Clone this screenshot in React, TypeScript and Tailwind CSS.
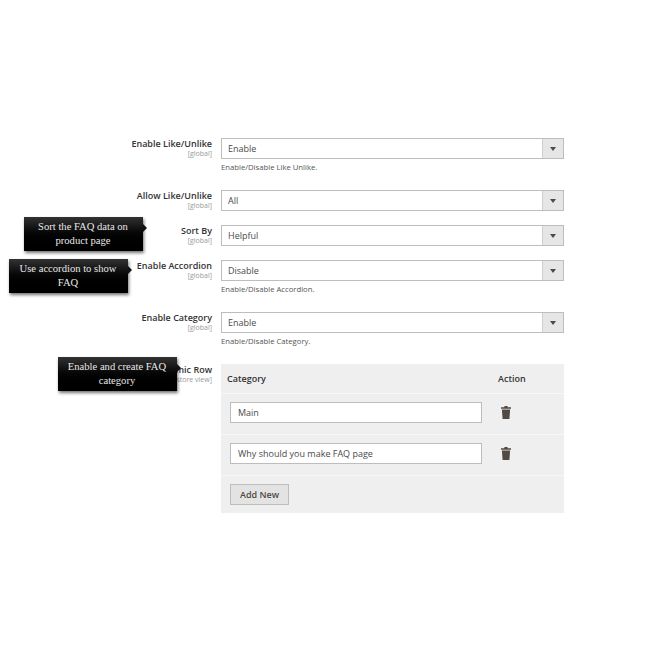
const Select = ({ value }: { value: string }) => (
  <div className="flex h-[21px] w-[343px] border border-[#bdbdbd] bg-white">
    <div className="flex flex-1 items-center pt-[1px] pl-[6px] text-[9px] text-[#4a4a4a]">{value}</div>
    <div className="flex w-[21px] items-center justify-center border-l border-[#cfcfcf] bg-[#e6e6e6]">
      <div className="h-0 w-0 border-x-[3px] border-t-[4px] border-x-transparent border-t-[#514943]" />
    </div>
  </div>
);

const Row = ({ label, scope, value, help, mb }: { label: string; scope: string; value: string; help?: string; mb: string }) => (
  <div className={`flex ${mb}`}>
    <div className="w-[212px] text-right">
      <div className="text-[9px] leading-[12px] font-semibold text-[#333]">{label}</div>
      <div className="text-[7px] leading-[8px] text-[#999]">{scope}</div>
    </div>
    <div className="ml-[9px]">
      <Select value={value} />
      {help && <div className="mt-[3px] text-[7.7px] leading-[11px] text-[#555]">{help}</div>}
    </div>
  </div>
);

const Tip = ({ className, lines }: { className: string; lines: string[] }) => (
  <div className={`absolute flex h-[34px] w-[119px] flex-col items-center justify-center bg-gradient-to-b from-[#333] via-[#050505] to-[#000] pr-[1px] pb-[1px] text-center font-['Liberation_Serif',serif] text-[10.6px] leading-[14px] text-[#e8e8e8] shadow-[1px_2px_3px_rgba(0,0,0,0.55)] ${className}`}>
    {lines.map((l) => (
      <div key={l}>{l}</div>
    ))}
    <div className="absolute top-[7px] left-full h-0 w-0 border-y-[4px] border-l-[4px] border-y-transparent border-l-[#111]" />
  </div>
);

const Trash = () => (
  <svg width="10" height="13" viewBox="0 0 10 13" className="fill-[#514943]">
    <path d="M3.6 0h2.8l.4 1.2H10v1.5H0V1.2h3.2zM.9 3.5h8.2L8.4 13H1.6z" />
  </svg>
);

const Item = ({ value }: { value: string }) => (
  <div className="flex h-[41px] items-start border-b border-[#f7f7f7] pt-[8px] pl-[9px]">
    <div className="flex h-[21px] w-[252px] items-center border border-[#bdbdbd] bg-white pl-[7px] text-[9px] text-[#4a4a4a]">{value}</div>
    <div className="mt-[4px] ml-[19px]"><Trash /></div>
  </div>
);

export default function App() {
  return (
    <div className="relative h-[670px] w-[670px] overflow-hidden bg-white pt-[138px] font-['Open_Sans',sans-serif]">
      <Row label="Enable Like/Unlike" scope="[global]" value="Enable" help="Enable/Disable Like Unlike." mb="mb-[17px]" />
      <Row label="Allow Like/Unlike" scope="[global]" value="All" mb="mb-[14px]" />
      <Row label="Sort By" scope="[global]" value="Helpful" mb="mb-[14px]" />
      <Row label="Enable Accordion" scope="[global]" value="Disable" help="Enable/Disable Accordion." mb="mb-[17px]" />
      <Row label="Enable Category" scope="[global]" value="Enable" help="Enable/Disable Category." mb="mb-[17px]" />
      <div className="flex">
        <div className="w-[212px] text-right">
          <div className="text-[9px] leading-[12px] font-semibold text-[#333]">Dynamic Row</div>
          <div className="text-[7px] leading-[8px] text-[#999]">[store view]</div>
        </div>
        <div className="ml-[9px] w-[343px] bg-[#efefef]">
          <div className="flex h-[30px] items-center border-b border-[#f7f7f7] pt-[1px] pl-[6px] text-[9px] font-semibold text-[#333]">
            <div className="w-[271px]">Category</div>
            <div>Action</div>
          </div>
          <Item value="Main" />
          <Item value="Why should you make FAQ page" />
          <div className="flex h-[37px] items-start pt-[8px] pl-[9px]">
            <div className="flex h-[21px] w-[59px] items-center justify-center border border-[#bdbdbd] bg-[#e3e3e3] text-[9px] font-semibold text-[#514943]">Add New</div>
          </div>
        </div>
      </div>
      <Tip className="top-[217px] left-[24px]" lines={["Sort the FAQ data on", "product page"]} />
      <Tip className="top-[259px] left-[9px]" lines={["Use accordion to show", "FAQ"]} />
      <Tip className="top-[357px] left-[58px]" lines={["Enable and create FAQ", "category"]} />
    </div>
  );
}
